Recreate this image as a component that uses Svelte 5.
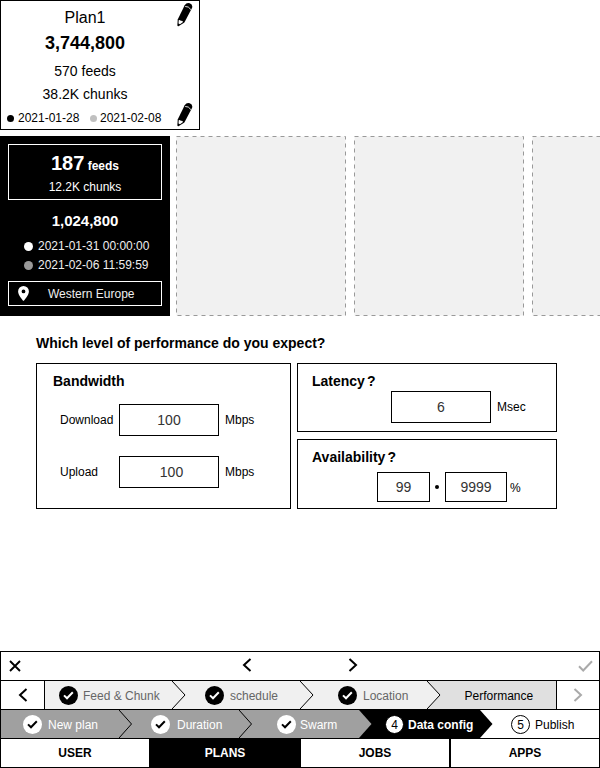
<script>
  const slots = [0, 1, 2];
  const feedSteps = [
    { label: 'Feed & Chunk', width: 127, pad: 14, gap: 5, done: true },
    { label: 'schedule', width: 128, pad: 33, gap: 6, done: true },
    { label: 'Location', width: 127, pad: 38, gap: 6, done: true },
    { label: 'Performance', width: 129, pad: 37.5, gap: 0, done: false }
  ];
  const planSteps = [
    { label: 'New plan', width: 118, pad: 22, gap: 6, kind: 'done' },
    { label: 'Duration', width: 120, pad: 32, gap: 7, kind: 'done' },
    { label: 'Swarm', width: 120, pad: 38, gap: 4, kind: 'done last' },
    { label: 'Data config', width: 121, pad: 26, gap: 4, kind: 'current', number: '4' },
    { label: 'Publish', width: 119, pad: 31, gap: 5, kind: 'next', number: '5' }
  ];
  const tabs = ['USER', 'PLANS', 'JOBS', 'APPS'];
</script>

{#snippet pencil()}
  <svg class="pencil" width="16" height="25" viewBox="0 0 16 25">
    <path d="M.7 17.4 7.7 3.2Q9.6 .2 12.7 1.2 16.2 2.6 15 6.1L7.4 20.4 1.5 24.2Q.4 24.4 .4 23.2Z" fill="#000" />
    <path d="M1.7 18.2Q3.4 17.5 3.8 18.9 5.6 18.5 6 20L3 22.2 1.5 21.6Z" fill="#fff" />
    <path d="M8.2 4.5Q11.5 4 13.9 7.6" fill="none" stroke="#fff" stroke-width=".9" />
  </svg>
{/snippet}

{#snippet check(bg, fg)}
  <svg width="19" height="19" viewBox="0 0 19 19">
    <circle cx="9.5" cy="9.5" r="9.5" fill={bg} />
    <path d="M5 9.4 8 12.3 13.8 6.3" fill="none" stroke={fg} stroke-width="2" />
  </svg>
{/snippet}

{#snippet chevron(right, color)}
  <svg width="10" height="14" viewBox="0 0 10 14">
    <path d={right ? 'M1.5 1 8 7 1.5 13' : 'M8.5 1 2 7 8.5 13'} fill="none" stroke={color} stroke-width="2" />
  </svg>
{/snippet}

<main>
  <section class="plan">
    <div class="totals">
      <div class="name">Plan1</div>
      <div class="amount">3,744,800</div>
      <div class="count">570 feeds</div>
      <div class="count">38.2K chunks</div>
    </div>
    <div class="dates">
      <i class="dot"></i><span class="from">2021-01-28</span>
      <i class="dot pale"></i><span>2021-02-08</span>
    </div>
    <div class="edits">{@render pencil()}{@render pencil()}</div>
  </section>

  <section class="cards">
    <article>
      <div class="feedbox">
        <div class="feeds"><b>187</b> feeds</div>
        <div class="chunks">12.2K chunks</div>
      </div>
      <div class="price">1,024,800</div>
      <div class="time"><i></i>2021-01-31 00:00:00</div>
      <div class="time end"><i></i>2021-02-06 11:59:59</div>
      <div class="region">
        <svg width="11" height="15" viewBox="0 0 11 15"><path fill="#fff" fill-rule="evenodd" d="M5.5 0A5.4 5.4 0 0 0 .1 5.4C.1 9.4 5.5 15 5.5 15S10.9 9.4 10.9 5.4A5.4 5.4 0 0 0 5.5 0ZM5.5 3.5A1.9 1.9 0 1 1 5.5 7.3A1.9 1.9 0 0 1 5.5 3.5Z" /></svg>
        <span>Western Europe</span>
      </div>
    </article>
    {#each slots as slot (slot)}
      <svg class="slot" width="170" height="180"><rect x=".5" y=".5" width="169" height="179" fill="#f1f1f1" stroke="#999" stroke-dasharray="4 4" /></svg>
    {/each}
  </section>

  <h1>Which level of performance do you expect?</h1>
  <section class="panels">
    <div class="panel bandwidth">
      <h2>Bandwidth</h2>
      <div class="field"><label for="down">Download</label><div class="box" id="down">100</div><span>Mbps</span></div>
      <div class="field up"><label for="up">Upload</label><div class="box" id="up">100</div><span>Mbps</span></div>
    </div>
    <div class="column">
      <div class="panel latency">
        <h2>Latency<span>?</span></h2>
        <div class="field"><div class="box">6</div><span>Msec</span></div>
      </div>
      <div class="panel availability">
        <h2>Availability<span>?</span></h2>
        <div class="field"><div class="box whole">99</div><i></i><div class="box fraction">9999</div><span>%</span></div>
      </div>
    </div>
  </section>

  <footer>
    <div class="bar tools">
      <svg class="close" width="12" height="12" viewBox="0 0 12 12"><path d="M1 1 11 11M11 1 1 11" stroke="#000" stroke-width="1.9" /></svg>
      <span class="prev">{@render chevron(false, '#000')}</span>
      <span class="forward">{@render chevron(true, '#000')}</span>
      <svg class="ok" width="15" height="12" viewBox="0 0 15 12"><path d="M1 6.3 5.2 10.5 14 1.2" fill="none" stroke="#aaa" stroke-width="2" /></svg>
    </div>
    <div class="bar steps feed">
      <div class="nav left">{@render chevron(false, '#000')}</div>
      {#each feedSteps as step, i (step.label)}
        <div class="step" class:active={!step.done} style="width:{step.width}px;padding-left:{step.pad}px;gap:{step.gap}px">
          {#if step.done}{@render check('#000', '#fff')}{/if}
          <span>{step.label}</span>
          {#if i < 3}
            <svg class="arrow" width="15" height="28" viewBox="0 0 15 28"><path d="M0 0 13 14 0 28" fill="#f0f0f0" stroke="#000" stroke-width="1" /></svg>
          {/if}
        </div>
      {/each}
      <div class="nav right">{@render chevron(true, '#aaa')}</div>
    </div>
    <div class="bar steps plans">
      {#each planSteps as step, i (step.label)}
        <div class="step {step.kind}" style="width:{step.width}px;padding-left:{step.pad}px;gap:{step.gap}px">
          {#if step.number}<b class="number">{step.number}</b>{:else}{@render check('#fff', '#000')}{/if}
          <span>{step.label}</span>
          {#if i < 4}
            <svg class="arrow" width="15" height="28" viewBox="0 0 15 28"><path d="M0 0 12.5 14 0 28" fill={i < 3 ? '#a0a0a0' : '#000'} stroke={i < 2 ? '#000' : 'none'} stroke-width="1" /></svg>
          {/if}
        </div>
      {/each}
    </div>
    <div class="bar tabs">
      {#each tabs as tab (tab)}<div class="tab" class:on={tab === 'PLANS'}>{tab}</div>{/each}
    </div>
  </footer>
</main>

<style>
  :global(body) { margin: 0; background: #fff; }
  main { width: 600px; height: 768px; overflow: hidden; display: flex; flex-direction: column; font: 12px/14px "Liberation Sans", Arial, sans-serif; color: #000; white-space: nowrap; }
  main :global(*) { box-sizing: border-box; }
  svg { display: block; flex: none; }
  h1, h2 { margin: 0; font-size: 14px; line-height: 16px; font-weight: bold; }

  .plan { position: relative; width: 200px; height: 130px; border: 1px solid #000; flex: none; }
  .totals { width: 168px; text-align: center; padding-top: 8px; }
  .name { font-size: 16px; line-height: 18px; }
  .amount { font-size: 18px; line-height: 20px; font-weight: bold; margin-top: 6px; }
  .count { font-size: 14px; line-height: 16px; margin-top: 10px; }
  .count + .count { margin-top: 7px; }
  .dates { display: flex; align-items: center; margin-top: 9px; padding-left: 6px; }
  .dot { width: 7px; height: 7px; border-radius: 50%; background: #000; margin-right: 4px; }
  .dot.pale { background: #c0c0c0; margin-right: 3px; }
  .from { margin-right: 10.6px; }
  .edits { position: absolute; top: 1px; right: 6px; height: 125px; display: flex; flex-direction: column; justify-content: space-between; }

  .cards { display: flex; margin-top: 6px; height: 180px; flex: none; }
  article { width: 170px; background: #000; color: #fff; padding: 8px; flex: none; margin-right: 6px; }
  .feedbox { height: 56px; border: 1px solid #fff; text-align: center; padding-top: 6px; }
  .feeds { font-weight: bold; height: 24px; line-height: 24px; }
  .feeds b { font-size: 20px; }
  .chunks { margin-top: 5px; }
  .price { font-size: 15px; line-height: 18px; font-weight: bold; text-align: center; margin-top: 12px; }
  .time { display: flex; align-items: center; height: 19px; margin-left: 16px; margin-top: 6px; color: #eee; }
  .time.end { margin-top: 0; }
  .time i { width: 9px; height: 9px; border-radius: 50%; background: #fff; margin: 1px 5px 0 0; }
  .time.end i { background: #999; }
  .region { height: 25px; border: 1px solid #fff; margin-top: 7px; display: flex; align-items: center; padding-left: 9px; color: #eee; }
  .region span { margin-left: 19px; }
  .slot { margin-right: 8px; }

  h1 { margin: 19px 0 0 36px; }
  .panels { display: flex; gap: 6px; margin: 12px 0 0 36px; height: 146px; }
  .panel { border: 1px solid #000; }
  .bandwidth { width: 255px; padding: 9px 0 0 16px; }
  .field { display: flex; align-items: center; }
  .field label { width: 59px; }
  .bandwidth .field { margin: 15px 0 0 7px; }
  .bandwidth .field.up { margin-top: 20px; }
  .up .box { padding-left: 5px; }
  .box { width: 100px; height: 32px; border: 1px solid #000; display: flex; align-items: center; justify-content: center; font: 14px/16px "Liberation Sans", Arial, sans-serif; color: #333; }
  .field > span { margin-left: 6px; }
  .column { display: flex; flex-direction: column; gap: 7px; width: 260px; }
  .column .panel { padding: 9px 0 0 14px; }
  h2 span { margin-left: 2px; }
  .latency { height: 69px; }
  .latency .field { margin: 2px 0 0 79px; }
  .availability { height: 70px; }
  .availability .field { margin: 7px 0 0 65px; }
  .availability .box { height: 30px; }
  .box.whole { width: 53px; }
  .box.fraction { width: 62px; }
  .availability i { width: 4px; height: 4px; border-radius: 50%; background: #000; margin: 0 6px 0 5px; }
  .availability .field > span { margin: 1px 0 0 3px; }

  footer { margin-top: auto; height: 117px; border: 1px solid #000; border-bottom: 0; flex: none; }
  .bar { display: flex; height: 29px; border-bottom: 1px solid #000; }
  .tools { align-items: center; padding: 0 6px 0 8px; }
  .prev { margin-left: 221px; margin-bottom: 2px; }
  .forward { margin-left: 96px; margin-bottom: 2px; }
  .ok { margin-left: auto; }
  .nav { display: flex; align-items: center; justify-content: center; }
  .nav.left { width: 44px; border-right: 1px solid #000; }
  .nav.right { flex: 1; border-left: 1px solid #000; }
  .step { position: relative; display: flex; align-items: center; flex: none; padding-top: 1px; }
  .step span { margin-top: 1px; }
  .arrow { position: absolute; left: 100%; top: 0; z-index: 1; }
  .feed .step { background: #f0f0f0; color: #666; }
  .feed .step.active { background: #e0e0e0; color: #000; }
  .plans .done { background: #a0a0a0; color: #fff; }
  .plans .current { background: #000; color: #fff; font-weight: bold; }
  .number { width: 19px; height: 19px; border-radius: 50%; border: 1px solid #000; background: #fff; color: #000; font-weight: normal; line-height: 18px; text-align: center; }
  .tab { width: 148px; line-height: 28px; text-align: center; font-weight: bold; flex: none; }
  .tab.on { width: 152px; background: #000; color: #fff; }
  .tab:last-child { width: 150px; border-left: 2px solid #000; }
</style>
